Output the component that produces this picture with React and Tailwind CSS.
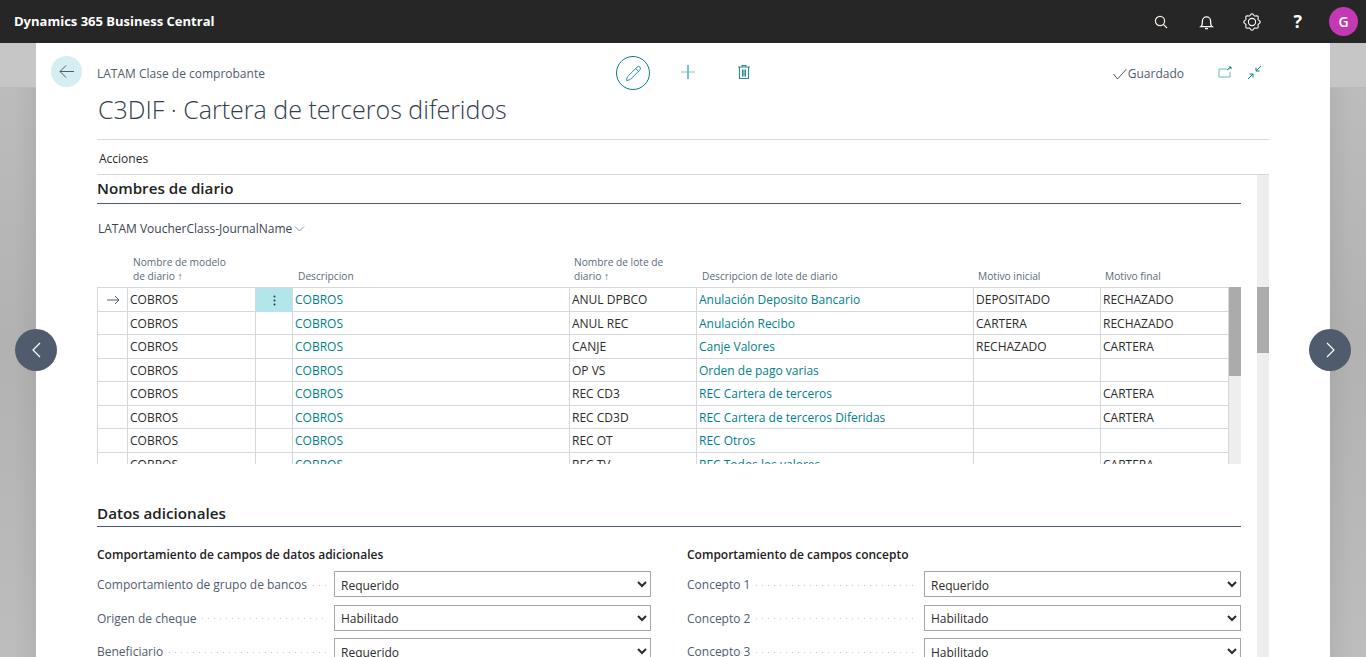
import { Pencil } from "lucide-react";

const rows = [
  ["COBROS", "COBROS", "ANUL DPBCO", "Anulación Deposito Bancario", "DEPOSITADO", "RECHAZADO"],
  ["COBROS", "COBROS", "ANUL REC", "Anulación Recibo", "CARTERA", "RECHAZADO"],
  ["COBROS", "COBROS", "CANJE", "Canje Valores", "RECHAZADO", "CARTERA"],
  ["COBROS", "COBROS", "OP VS", "Orden de pago varias", "", ""],
  ["COBROS", "COBROS", "REC CD3", "REC Cartera de terceros", "", "CARTERA"],
  ["COBROS", "COBROS", "REC CD3D", "REC Cartera de terceros Diferidas", "", "CARTERA"],
  ["COBROS", "COBROS", "REC OT", "REC Otros", "", ""],
  ["COBROS", "COBROS", "REC TV", "REC Todos los valores", "", "CARTERA"],
];

const leftFields = [
  ["Comportamiento de grupo de bancos", "Requerido"],
  ["Origen de cheque", "Habilitado"],
  ["Beneficiario", "Requerido"],
];

const rightFields = [
  ["Concepto 1", "Requerido"],
  ["Concepto 2", "Habilitado"],
  ["Concepto 3", "Habilitado"],
];

const gridCols = "grid grid-cols-[31px_128px_37px_277px_127px_277px_127px_128px]";

function SectionTitle({ children, className }) {
  return (
    <div className={`border-b border-[#505c6d] h-[29px] flex items-center text-[15.2px] font-semibold text-[#212121] w-[1144px] ${className}`}>
      {children}
    </div>
  );
}

function Field({ label, value }) {
  return (
    <div className="flex items-center h-[26px] mb-[7.5px]">
      <span className="text-[12px] text-[#505c6d] whitespace-nowrap pt-[2px]">{label}</span>
      <span className="flex-1 mx-[6px] mt-[2px] h-px bg-[repeating-linear-gradient(90deg,#c8c8c8_0,#c8c8c8_1px,transparent_1px,transparent_6px)]" />
      <select
        defaultValue={value}
        className="w-[317px] h-[26px] shrink-0 border border-[#a6a6a6] bg-white text-[12px] text-[#2b2b2b] pl-[2px] pt-[2px] appearance-auto"
      >
        <option>Requerido</option>
        <option>Habilitado</option>
      </select>
    </div>
  );
}

function Row({ row, first }) {
  return (
    <div className={`${gridCols} h-[23.5px] border-b border-[#d5d8dc] text-[12px] leading-[24px] text-[#2b2b2b]`}>
      <div className="border-x border-[#d5d8dc] flex items-center justify-center text-[#505c6d]">
        {first && (
          <svg width="14" height="10" viewBox="0 0 14 10" fill="none" stroke="currentColor" strokeWidth="1">
            <path d="M1 5h12M9 1l4 4-4 4" />
          </svg>
        )}
      </div>
      <div className="border-r border-[#d5d8dc] pl-[2px]">{row[0]}</div>
      <div className={`border-r border-[#d5d8dc] flex items-center justify-center ${first ? "bg-[#b2e6eb]" : ""}`}>
        {first && (
          <svg width="3" height="11" viewBox="0 0 3 11" fill="#333">
            <circle cx="1.5" cy="1.5" r="1" />
            <circle cx="1.5" cy="5.5" r="1" />
            <circle cx="1.5" cy="9.5" r="1" />
          </svg>
        )}
      </div>
      <div className="border-r border-[#d5d8dc] pl-[2px] text-[#00808a]">{row[1]}</div>
      <div className="border-r border-[#d5d8dc] pl-[2px]">{row[2]}</div>
      <div className="border-r border-[#d5d8dc] pl-[2px] text-[#00808a]">{row[3]}</div>
      <div className="border-r border-[#d5d8dc] pl-[2px]">{row[4]}</div>
      <div className="pl-[2px] border-r border-[#d5d8dc]">{row[5]}</div>
    </div>
  );
}

// scalloped gear outline, 8 bumps
const gearPath = Array.from({ length: 96 }, (_, i) => {
  const a = (i / 96) * Math.PI * 2;
  const r = 7.4 + 0.8 * Math.cos(a * 8);
  return `${i ? "L" : "M"}${(9 + r * Math.sin(a)).toFixed(2)} ${(9 - r * Math.cos(a)).toFixed(2)}`;
}).join("") + "Z";

function SideStrip({ dark }) {
  return (
    <div className="flex flex-col">
      <div className="h-[45px] shrink-0 border-b border-[#b9b9b9] bg-[#c6c6c6]" />
      <div
        className={`flex-1 ${
          dark === "right"
            ? "bg-[linear-gradient(90deg,transparent_40%,rgba(0,0,0,.05)_100%),linear-gradient(180deg,#bcbcbc_0,#b2b2b2_45%,#bdbdbd_100%)]"
            : "bg-[linear-gradient(270deg,transparent_40%,rgba(0,0,0,.05)_100%),linear-gradient(180deg,#bcbcbc_0,#b2b2b2_45%,#bdbdbd_100%)]"
        }`}
      />
    </div>
  );
}

export default function App() {
  return (
    <div className="relative w-[1366px] h-[657px] overflow-hidden flex flex-col font-['Open_Sans','Noto_Sans',sans-serif]">
      <header className="h-[43px] shrink-0 bg-[#262626] flex items-center text-white">
        <span className="ml-[14px] text-[13px] font-bold">Dynamics 365 Business Central</span>
        <div className="ml-auto flex items-center">
          <svg className="mr-[31px]" width="14" height="14" viewBox="0 0 14 14" fill="none" stroke="#f6efe2" strokeWidth="1.2">
            <circle cx="6" cy="6" r="4.6" />
            <path d="M9.4 9.4L13 13" />
          </svg>
          <svg className="mr-[29px]" width="15" height="16" viewBox="0 0 15 16" fill="none" stroke="#fff" strokeWidth="1.3">
            <path d="M2 12.6c1.1-.8 1.4-2 1.4-5.6a4.1 4.1 0 018.2 0c0 3.6.3 4.8 1.4 5.6z" />
            <path d="M6 14.6h3" />
          </svg>
          <svg className="mr-[32px]" width="18" height="18" viewBox="0 0 18 18" fill="none" stroke="#fff" strokeWidth="1.1">
            <path d={gearPath} />
            <circle cx="9" cy="9" r="3.6" />
          </svg>
          <span className="text-[18px] font-bold mr-[27px]">?</span>
          <span className="w-[29px] h-[29px] mr-[8px] rounded-full bg-[#c239b3] flex items-center justify-center text-[14px] font-semibold">G</span>
        </div>
      </header>

      <div className="flex-1 min-h-0 grid grid-cols-[36px_1294px_36px]">
        <SideStrip dark="right" />
        <main className="bg-white pl-[61px] pr-[61px] flex flex-col min-h-0">
          <div className="h-[97px] shrink-0 border-b border-[#d5d8dc] flex w-[1172px]">
            <div className="w-[520px] pt-[22px]">
              <div className="text-[12px] text-[#505c6d] leading-[17px]">LATAM Clase de comprobante</div>
              <h1 className="text-[25px] font-light text-[#323c4b] mt-[10px] leading-[34px] pl-px whitespace-nowrap">C3DIF · Cartera de terceros diferidos</h1>
            </div>
            <div className="pt-[13px] flex items-start text-[#00808a]">
              <span className="w-[34px] h-[34px] ml-[-1px] rounded-full border border-[#00808a] flex items-center justify-center">
                <Pencil size={17} strokeWidth={1.2} />
              </span>
              <svg className="ml-[30px] mt-[8px]" width="16" height="16" viewBox="0 0 16 16" fill="none" stroke="currentColor">
                <path d="M8 1v14" />
                <path d="M1 8h14" stroke="#7fbfc4" />
              </svg>
              <svg className="ml-[41px] mt-[8px]" width="14" height="16" viewBox="0 0 14 16" fill="none" stroke="#2a8a94" strokeWidth="1.1">
                <path d="M1 3h12M5 3V1.5h4V3M2.5 3v11.5h9V3M5.5 5.5v7M7 5.5v7M8.5 5.5v7" />
              </svg>
            </div>
            <div className="ml-auto pt-[21px] pr-[7px] flex items-start">
              <span className="flex items-center text-[12px] text-[#505c6d] pt-px">
                <svg width="16" height="12" viewBox="0 0 15 12" fill="none" stroke="#505c6d">
                  <path d="M1 6l4 5 9-10" />
                </svg>
                Guardado
              </span>
              <svg className="ml-[34px] mt-[2px]" width="14" height="12" viewBox="0 0 14 12" fill="none" stroke="#00808a">
                <path d="M9 3H1v8h11V6" stroke="#6fb7bd" />
                <path d="M9 4l4-3M11 1h2v2" />
              </svg>
              <svg className="ml-[15px] mt-[1px]" width="15" height="15" viewBox="0 0 15 15" fill="none" stroke="#00808a">
                <path d="M14 1L9 6M9 2.5V6h3.5M1 14l5-5M2.5 9H6v3.5" />
              </svg>
            </div>
          </div>

          <div className="h-[35px] shrink-0 border-b border-[#d5d8dc] flex items-center w-[1172px] text-[12px] text-[#2b2b2b] pl-[2px] pt-[3px]">
            Acciones
          </div>

          <div className="flex-1 min-h-0 w-[1172px] flex overflow-hidden">
            <div className="w-[1144px] shrink-0">
              <SectionTitle className="pb-px">Nombres de diario</SectionTitle>

              <div className="h-[51px] flex items-center text-[12px] text-[#3c4553] pb-[2px]">
                <span className="pl-px">LATAM VoucherClass-JournalName</span>
                <svg className="ml-[2px]" width="11" height="6" viewBox="0 0 11 6" fill="none" stroke="#8a93a0">
                  <path d="M1 .5l4.5 4.5L10 .5" />
                </svg>
              </div>

              <div className="w-[1144px] h-[209px] overflow-hidden relative">
                <div className={`${gridCols} h-[32px] text-[10.2px] leading-[14px] text-[#5c6b7a] items-end pb-[8px]`}>
                  <div />
                  <div className="col-span-2 pl-[5px]">
                    Nombre de modelo<br />de diario ↑
                  </div>
                  <div className="pl-[5px]">Descripcion</div>
                  <div className="pl-[4px]">Nombre de lote de<br />diario ↑</div>
                  <div className="pl-[5px]">Descripcion de lote de diario</div>
                  <div className="pl-[4px]">Motivo inicial</div>
                  <div className="pl-[4px]">Motivo final</div>
                </div>
                <div className="border-t border-[#d5d8dc]">
                  {rows.map((row, i) => (
                    <Row key={row[2]} row={row} first={i === 0} />
                  ))}
                </div>
                <div className="absolute right-0 top-[32px] bottom-0 w-[12px] bg-[#eeeeee]">
                  <div className="h-[89px] bg-[#ababab]" />
                </div>
              </div>

              <div className="mt-[34px]">
                <SectionTitle className="pt-[3px]">Datos adicionales</SectionTitle>
              </div>
              <div className="grid grid-cols-[554px_554px] gap-x-[36px] mt-[19px]">
                <div>
                  <div className="text-[12px] font-semibold text-[#212121] h-[17px] mb-[8px]">Comportamiento de campos de datos adicionales</div>
                  {leftFields.map(([label, value]) => (
                    <Field key={label} label={label} value={value} />
                  ))}
                </div>
                <div>
                  <div className="text-[12px] font-semibold text-[#212121] h-[17px] mb-[8px]">Comportamiento de campos concepto</div>
                  {rightFields.map(([label, value]) => (
                    <Field key={label} label={label} value={value} />
                  ))}
                </div>
              </div>
            </div>
            <div className="ml-[16px] w-[12px] shrink-0 bg-[#eeeeee]">
              <div className="h-[112px]" />
              <div className="h-[66px] bg-[#ababab]" />
            </div>
          </div>
        </main>
        <SideStrip dark="left" />
      </div>

      <button className="absolute left-[15px] top-[329px] w-[42px] h-[42px] rounded-full bg-[#505c6d] flex items-center justify-center">
        <svg width="9" height="16" viewBox="0 0 9 16" fill="none" stroke="#fff" strokeWidth="1.2"><path d="M8 1L1 8l7 7" /></svg>
      </button>
      <button className="absolute left-[1309px] top-[329px] w-[42px] h-[42px] rounded-full bg-[#505c6d] flex items-center justify-center">
        <svg width="9" height="16" viewBox="0 0 9 16" fill="none" stroke="#fff" strokeWidth="1.2"><path d="M1 1l7 7-7 7" /></svg>
      </button>
      <button className="absolute left-[51px] top-[56px] w-[31px] h-[31px] rounded-full bg-[#d5eef1] flex items-center justify-center">
        <svg width="15" height="13" viewBox="0 0 15 13" fill="none" stroke="#505c6d"><path d="M15 6.5H1M7 .5l-6 6 6 6" /></svg>
      </button>
    </div>
  );
}
